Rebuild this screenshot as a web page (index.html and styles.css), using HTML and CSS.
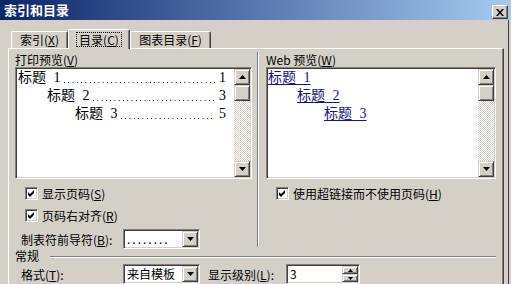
FILE: index.html
```html
<!DOCTYPE html>
<html lang="zh-CN">
<head>
<meta charset="utf-8">
<title>索引和目录</title>
<link rel="stylesheet" href="styles.css">
</head>
<body>
<div class="window">
  <div class="titlebar">
    <span class="title">索引和目录</span>
    <div class="close"><svg width="8" height="7" viewBox="0 0 8 7"><path d="M0 0h2l2 2.4L6 0h2L5 3.5 8 7H6L4 4.6 2 7H0l3-3.5z" fill="#000"/></svg></div>
  </div>
  <div class="client">
    <div class="tabs">
      <div class="tab t1">索引(<u>X</u>)</div>
      <div class="tab t2 active"><span class="focus">目录(<u>C</u>)</span></div>
      <div class="tab t3">图表目录(<u>F</u>)</div>
    </div>
    <div class="panel">
      <div class="top">
        <div class="col left">
          <div class="label">打印预览(<u>V</u>)</div>
          <div class="listbox">
            <div class="list">
              <div class="row lv1"><span class="h">标题 1</span><span class="leader"></span><span class="pg">1</span></div>
              <div class="row lv2"><span class="h">标题 2</span><span class="leader"></span><span class="pg">3</span></div>
              <div class="row lv3"><span class="h">标题 3</span><span class="leader"></span><span class="pg">5</span></div>
            </div>
            <div class="scrollbar">
              <div class="btn sb-btn"><svg width="7" height="4" viewBox="0 0 7 4"><path d="M3.5 0L7 4H0z" fill="#000"/></svg></div>
              <div class="btn sb-thumb"></div>
              <div class="sb-track"></div>
              <div class="btn sb-btn"><svg width="7" height="4" viewBox="0 0 7 4"><path d="M0 0h7L3.5 4z" fill="#000"/></svg></div>
            </div>
          </div>
          <div class="check c1"><span class="cb"><svg width="7" height="7" viewBox="0 0 7 7"><path d="M0 2L2 4L6 0V3L2 7L0 5z" fill="#000"/></svg></span><span>显示页码(<u>S</u>)</span></div>
          <div class="check c2"><span class="cb"><svg width="7" height="7" viewBox="0 0 7 7"><path d="M0 2L2 4L6 0V3L2 7L0 5z" fill="#000"/></svg></span><span>页码右对齐(<u>R</u>)</span></div>
          <div class="field f1">
            <span class="flabel">制表符前导符(<u>B</u>):</span>
            <div class="combo"><span class="val dots">........</span><span class="btn dropbtn"><svg width="7" height="4" viewBox="0 0 7 4"><path d="M0 0h7L3.5 4z" fill="#000"/></svg></span></div>
          </div>
        </div>
        <div class="vgroove"></div>
        <div class="col right">
          <div class="label">Web 预览(<u>W</u>)</div>
          <div class="listbox">
            <div class="list web">
              <div class="row lv1"><span class="link">标题 1</span></div>
              <div class="row lv2"><span class="link">标题 2</span></div>
              <div class="row lv3"><span class="link">标题 3</span></div>
            </div>
            <div class="scrollbar">
              <div class="btn sb-btn"><svg width="7" height="4" viewBox="0 0 7 4"><path d="M3.5 0L7 4H0z" fill="#000"/></svg></div>
              <div class="btn sb-thumb"></div>
              <div class="sb-track"></div>
              <div class="btn sb-btn"><svg width="7" height="4" viewBox="0 0 7 4"><path d="M0 0h7L3.5 4z" fill="#000"/></svg></div>
            </div>
          </div>
          <div class="check c1"><span class="cb"><svg width="7" height="7" viewBox="0 0 7 7"><path d="M0 2L2 4L6 0V3L2 7L0 5z" fill="#000"/></svg></span><span>使用超链接而不使用页码(<u>H</u>)</span></div>
        </div>
      </div>
      <div class="group"><span>常规</span><span class="hgroove"></span></div>
      <div class="field f2">
        <span class="flabel">格式(<u>T</u>):</span>
        <div class="combo"><span class="val">来自模板</span><span class="btn dropbtn"><svg width="7" height="4" viewBox="0 0 7 4"><path d="M0 0h7L3.5 4z" fill="#000"/></svg></span></div>
        <span class="spinlabel">显示级别(<u>L</u>):</span>
        <div class="spin"><span class="val">3</span><span class="spinbtns"><span class="btn half"><svg width="5" height="3" viewBox="0 0 5 3"><path d="M2.5 0L5 3H0z" fill="#000"/></svg></span><span class="btn half"><svg width="5" height="3" viewBox="0 0 5 3"><path d="M0 0h5L2.5 3z" fill="#000"/></svg></span></span></div>
      </div>
    </div>
  </div>
</div>
</body>
</html>
```
FILE: styles.css
```css
* { box-sizing: border-box; }
body {
  margin: 0;
  background: #ffffff;
  font: 12px "Noto Sans CJK SC", sans-serif;
  color: #000;
}
u { text-decoration: underline; text-underline-offset: 1px; }

.window {
  width: 511px;
  height: 284px;
  overflow: hidden;
  background: #d4d0c8;
  display: flex;
  flex-direction: column;
}
.titlebar {
  flex: none;
  height: 20px;
  background: linear-gradient(to right, #0a246a, #a6caf0);
  display: flex;
  justify-content: space-between;
  padding: 0 3px 0 4px;
}
.title {
  color: #fff;
  font-weight: bold;
  font-size: 13px;
  line-height: 20px;
}
.btn {
  background: #d4d0c8;
  border: 1px solid;
  border-color: #d4d0c8 #404040 #404040 #d4d0c8;
  box-shadow: inset 1px 1px #fff, inset -1px -1px #808080;
  display: flex;
  align-items: center;
  justify-content: center;
}
.close {
  width: 16px;
  height: 14px;
  margin-top: 5px;
  background: #d4d0c8;
  border: 1px solid;
  border-color: #fff #404040 #404040 #fff;
  box-shadow: inset -1px -1px #808080;
  display: flex;
  align-items: center;
  justify-content: center;
}

.client {
  flex: 1;
  margin-right: 2px;
  border-right: 1px solid #404040;
  padding-top: 9px;
}

.tabs {
  display: flex;
  align-items: flex-end;
  height: 19px;
  padding-left: 11px;
  position: relative;
  z-index: 1;
}
.tab {
  height: 17px;
  border: 1px solid;
  border-color: #fff #404040 transparent #fff;
  border-bottom: none;
  border-radius: 2px 2px 0 0;
  box-shadow: inset -1px 0 #808080;
  text-align: center;
  line-height: 15px;
  background: #d4d0c8;
}
.t1 { width: 57px; }
.t2 { width: 62px; }
.t3 { width: 81px; }
.tab.active {
  height: 20px;
  margin-bottom: -1px;
  padding-top: 2px;
}
.focus {
  display: inline-block;
  border: 1px dotted #000;
  line-height: 13px;
  padding: 0 2px;
}

.panel {
  margin-left: 8px;
  width: 496px;
  height: 240px;
  border: 1px solid;
  border-color: #fff #404040 #404040 #fff;
  box-shadow: inset -1px 0 #808080;
  padding: 3px 7px 0 6px;
}
.top { display: flex; }
.col.left { width: 237px; }
.col.right { width: 230px; }
.vgroove {
  width: 2px;
  margin: 0 7px 2px 5px;
  border-left: 1px solid #808080;
  border-right: 1px solid #fff;
}
.label { height: 15px; line-height: 15px; }

.listbox {
  height: 112px;
  display: flex;
  background: #fff;
  border: 1px solid;
  border-color: #808080 #fff #fff #808080;
  box-shadow: inset 1px 1px #404040, inset -1px -1px #d4d0c8;
  padding: 1px;
}
.list { flex: 1; padding-top: 0; }
.row {
  display: flex;
  align-items: baseline;
  height: 18px;
  line-height: 18px;
  font: 14px "Liberation Serif", "Noto Sans CJK SC", serif;
  white-space: pre;
  word-spacing: 4px;
}
.row span { line-height: 18px; }
.list .lv1 { padding-left: 1px; }
.list .lv2 { padding-left: 30px; }
.list .lv3 { padding-left: 58px; }
.list .row { padding-right: 8px; }
.leader {
  flex: 1;
  align-self: stretch;
  margin: 0 4px 0 3px;
  background-image: linear-gradient(to right, #000 0 1px, transparent 1px);
  background-size: 4.3px 1px;
  background-repeat: repeat-x;
  background-position: 0 13px;
}
.web .lv1 { padding-left: 0; }
.web .lv2 { padding-left: 29px; }
.web .lv3 { padding-left: 56px; }
.link {
  color: #14148c;
  text-decoration: underline;
  text-underline-offset: 2px;
}

.scrollbar {
  width: 16px;
  display: flex;
  flex-direction: column;
}
.sb-btn, .sb-thumb { height: 16px; flex: none; }
.sb-track {
  flex: 1;
  background: repeating-conic-gradient(#d4d0c8 0 25%, #fff 0 50%) 0 0 / 2px 2px;
}

.check {
  display: flex;
  align-items: center;
  height: 13px;
  padding-left: 10px;
  gap: 4px;
  line-height: 13px;
}
.c1 { margin-top: 8px; }
.c2 { margin-top: 9px; }
.cb {
  width: 13px;
  height: 13px;
  flex: none;
  background: #fff;
  border: 1px solid;
  border-color: #808080 #fff #fff #808080;
  box-shadow: inset 1px 1px #404040, inset -1px -1px #d4d0c8;
  display: flex;
  align-items: center;
  justify-content: center;
}

.field {
  display: flex;
  align-items: center;
  height: 20px;
}
.f1 { margin-top: 7px; }
.f2 { margin-top: 1px; }
.flabel {
  width: 108px;
  padding-left: 6px;
  flex: none;
}
.combo, .spin {
  height: 20px;
  display: flex;
  background: #fff;
  border: 1px solid;
  border-color: #808080 #fff #fff #808080;
  box-shadow: inset 1px 1px #404040, inset -1px -1px #d4d0c8;
  padding: 1px;
  flex: none;
}
.combo { width: 77px; }
.combo .val, .spin .val {
  flex: 1;
  padding-left: 2px;
  line-height: 16px;
}
.dots { letter-spacing: 2px; }
.dropbtn { width: 16px; height: 16px; }

.group {
  display: flex;
  align-items: center;
  height: 14px;
  margin-top: 0;
  line-height: 14px;
}
.hgroove {
  flex: 1;
  height: 2px;
  margin: 2px 0 0 11px;
  border-top: 1px solid #808080;
  border-bottom: 1px solid #fff;
}

.spinlabel {
  width: 78px;
  margin-left: 8px;
  flex: none;
}
.spin { width: 74px; }
.spinbtns {
  width: 16px;
  display: flex;
  flex-direction: column;
}
.half { height: 8px; flex: none; }
```
